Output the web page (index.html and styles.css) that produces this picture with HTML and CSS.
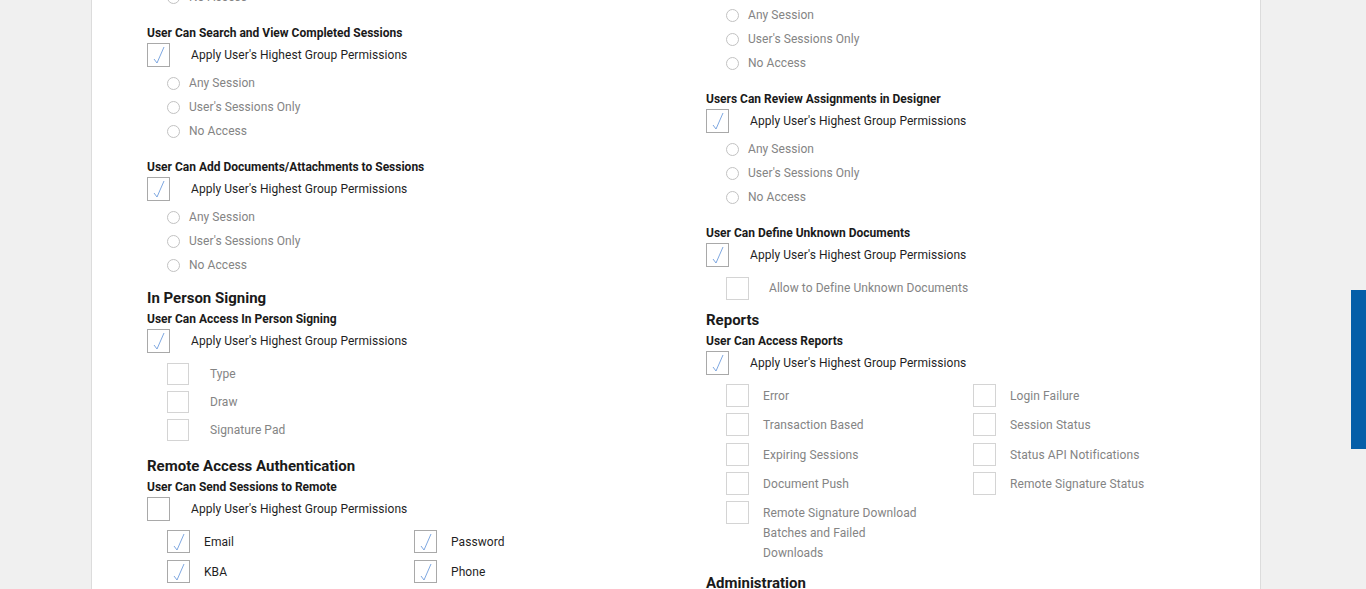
FILE: index.html
```html
<!DOCTYPE html>
<html lang="en">
<head>
<meta charset="utf-8">
<title>Permissions</title>
<link rel="stylesheet" href="styles.css">
</head>
<body>
<div class="panel">
  <div class="cols">
    <div class="col col-left">
      <div class="radio-row"><span class="radio"></span><span class="opt">No Access</span></div>

      <div class="field">
        <div class="field-title">User Can Search and View Completed Sessions</div>
        <div class="apply-row"><span class="cb on"><svg viewBox="0 0 21 22"><polyline points="6,15 9,19 16,3"/></svg></span><span class="apply">Apply User's Highest Group Permissions</span></div>
        <div class="radios">
          <div class="radio-row"><span class="radio"></span><span class="opt">Any Session</span></div>
          <div class="radio-row"><span class="radio"></span><span class="opt">User's Sessions Only</span></div>
          <div class="radio-row"><span class="radio"></span><span class="opt">No Access</span></div>
        </div>
      </div>

      <div class="field">
        <div class="field-title">User Can Add Documents/Attachments to Sessions</div>
        <div class="apply-row"><span class="cb on"><svg viewBox="0 0 21 22"><polyline points="6,15 9,19 16,3"/></svg></span><span class="apply">Apply User's Highest Group Permissions</span></div>
        <div class="radios">
          <div class="radio-row"><span class="radio"></span><span class="opt">Any Session</span></div>
          <div class="radio-row"><span class="radio"></span><span class="opt">User's Sessions Only</span></div>
          <div class="radio-row"><span class="radio"></span><span class="opt">No Access</span></div>
        </div>
      </div>

      <div class="section-title s-after-radios">In Person Signing</div>
      <div class="field-title f-after-section">User Can Access In Person Signing</div>
      <div class="apply-row"><span class="cb on"><svg viewBox="0 0 21 22"><polyline points="6,15 9,19 16,3"/></svg></span><span class="apply">Apply User's Highest Group Permissions</span></div>
      <div class="subs">
        <div class="sub-row"><span class="cb sub"></span><span class="opt">Type</span></div>
        <div class="sub-row"><span class="cb sub"></span><span class="opt">Draw</span></div>
        <div class="sub-row"><span class="cb sub"></span><span class="opt">Signature Pad</span></div>
      </div>

      <div class="section-title s-after-subs">Remote Access Authentication</div>
      <div class="field-title f-after-section">User Can Send Sessions to Remote</div>
      <div class="apply-row"><span class="cb"></span><span class="apply">Apply User's Highest Group Permissions</span></div>
      <div class="opt-grid remote">
        <div class="opt-item"><span class="cb on"><svg viewBox="0 0 21 22"><polyline points="6,15 9,19 16,3"/></svg></span><span class="opt-label dark">Email</span></div>
        <div class="opt-item"><span class="cb on"><svg viewBox="0 0 21 22"><polyline points="6,15 9,19 16,3"/></svg></span><span class="opt-label dark">Password</span></div>
        <div class="opt-item"><span class="cb on"><svg viewBox="0 0 21 22"><polyline points="6,15 9,19 16,3"/></svg></span><span class="opt-label dark">KBA</span></div>
        <div class="opt-item"><span class="cb on"><svg viewBox="0 0 21 22"><polyline points="6,15 9,19 16,3"/></svg></span><span class="opt-label dark">Phone</span></div>
      </div>
    </div>

    <div class="col col-right">
      <div class="radios first">
        <div class="radio-row"><span class="radio"></span><span class="opt">Any Session</span></div>
        <div class="radio-row"><span class="radio"></span><span class="opt">User's Sessions Only</span></div>
        <div class="radio-row"><span class="radio"></span><span class="opt">No Access</span></div>
      </div>

      <div class="field">
        <div class="field-title">Users Can Review Assignments in Designer</div>
        <div class="apply-row"><span class="cb on"><svg viewBox="0 0 21 22"><polyline points="6,15 9,19 16,3"/></svg></span><span class="apply">Apply User's Highest Group Permissions</span></div>
        <div class="radios">
          <div class="radio-row"><span class="radio"></span><span class="opt">Any Session</span></div>
          <div class="radio-row"><span class="radio"></span><span class="opt">User's Sessions Only</span></div>
          <div class="radio-row"><span class="radio"></span><span class="opt">No Access</span></div>
        </div>
      </div>

      <div class="field">
        <div class="field-title">User Can Define Unknown Documents</div>
        <div class="apply-row"><span class="cb on"><svg viewBox="0 0 21 22"><polyline points="6,15 9,19 16,3"/></svg></span><span class="apply">Apply User's Highest Group Permissions</span></div>
        <div class="subs">
          <div class="sub-row allow"><span class="cb sub big"></span><span class="opt">Allow to Define Unknown Documents</span></div>
        </div>
      </div>

      <div class="section-title s-after-allow">Reports</div>
      <div class="field-title f-after-section">User Can Access Reports</div>
      <div class="apply-row"><span class="cb on"><svg viewBox="0 0 21 22"><polyline points="6,15 9,19 16,3"/></svg></span><span class="apply">Apply User's Highest Group Permissions</span></div>
      <div class="opt-grid reports">
        <div class="opt-item"><span class="cb sub big"></span><span class="opt-label">Error</span></div>
        <div class="opt-item"><span class="cb sub big"></span><span class="opt-label">Login Failure</span></div>
        <div class="opt-item"><span class="cb sub big"></span><span class="opt-label">Transaction Based</span></div>
        <div class="opt-item"><span class="cb sub big"></span><span class="opt-label">Session Status</span></div>
        <div class="opt-item"><span class="cb sub big"></span><span class="opt-label">Expiring Sessions</span></div>
        <div class="opt-item"><span class="cb sub big"></span><span class="opt-label">Status API Notifications</span></div>
        <div class="opt-item"><span class="cb sub big"></span><span class="opt-label">Document Push</span></div>
        <div class="opt-item"><span class="cb sub big"></span><span class="opt-label">Remote Signature Status</span></div>
        <div class="opt-item"><span class="cb sub big"></span><span class="opt-label">Remote Signature Download Batches and Failed Downloads</span></div>
      </div>

      <div class="section-title s-after-grid">Administration</div>
    </div>
  </div>
</div>
<div class="side-tab"></div>
</body>
</html>
```

FILE: styles.css
```css
html, body {
  margin: 0;
  padding: 0;
}
body {
  background: #f0f0f0;
  font-family: Roboto, "Liberation Sans", Arial, sans-serif;
  color: #1f1f1f;
  height: 589px;
  overflow: hidden;
}
.panel {
  margin-left: 91px;
  width: 1170px;
  margin-top: -15px;
  background: #ffffff;
  border-left: 1px solid #dcdcdc;
  border-right: 1px solid #dcdcdc;
  padding-left: 55px;
  box-sizing: border-box;
  min-height: 700px;
}
.cols {
  display: grid;
  grid-template-columns: 559px 1fr;
}
.col-right {
  padding-top: 18px;
}

/* titles */
.field-title {
  font-size: 12px;
  font-weight: 700;
  line-height: 16px;
  color: #1a1a1a;
}
.field {
  margin-top: 16px;
}
.section-title {
  font-size: 15px;
  font-weight: 700;
  line-height: 18px;
  color: #1a1a1a;
}
.s-after-radios { margin-top: 12px; }
.s-after-subs { margin-top: 13px; }
.s-after-allow { margin-top: 9px; }
.s-after-grid { margin-top: 11px; }
.f-after-section { margin-top: 4px; }

/* apply checkbox row */
.apply-row {
  margin-top: 2px;
  height: 24px;
  display: flex;
  align-items: center;
  gap: 21px;
}
.apply {
  font-size: 12px;
  color: #1f1f1f;
  line-height: 16px;
  letter-spacing: 0.06px;
}

/* checkboxes */
.cb {
  flex: none;
  width: 23px;
  height: 24px;
  box-sizing: border-box;
  border: 1px solid #a9a9a9;
  background: #fff;
  display: block;
}
.cb svg {
  display: block;
  width: 21px;
  height: 22px;
}
.cb polyline {
  fill: none;
  stroke: #6f9ddd;
  stroke-width: 0.9;
  stroke-linejoin: miter;
}
.cb.sub {
  width: 22px;
  height: 22px;
  border-color: #d4d4d4;
}
.cb.sub.big {
  width: 23px;
  height: 23px;
}

/* radios */
.radios {
  margin-top: 4px;
}
.radios.first {
  margin-top: 0;
}
.radio-row {
  height: 24px;
  display: flex;
  align-items: center;
  padding-left: 20px;
  gap: 9px;
}
.radio {
  flex: none;
  width: 13px;
  height: 13px;
  box-sizing: border-box;
  border: 1px solid #c2c2c2;
  border-radius: 50%;
  background: #fff;
}
.opt {
  font-size: 12px;
  line-height: 16px;
  color: #848484;
  letter-spacing: 0.06px;
}

/* sub checkbox rows */
.subs {
  margin-top: 7px;
}
.sub-row {
  height: 28px;
  display: flex;
  align-items: center;
  padding-left: 20px;
  gap: 21px;
}
.sub-row.allow {
  gap: 20px;
}

/* two-column option grid */
.opt-grid {
  margin-top: 9px;
  padding-left: 20px;
  display: grid;
  grid-template-columns: 247px 247px;
  row-gap: 6px;
}
.opt-grid.remote {
  row-gap: 6.5px;
}
.opt-grid.reports {
  row-gap: 6.3px;
}
.opt-item {
  display: flex;
  align-items: flex-start;
  gap: 14px;
}
.opt-item .cb {
  height: 23px;
}
.opt-label {
  font-size: 12px;
  line-height: 20px;
  padding-top: 2px;
  color: #848484;
  max-width: 160px;
  letter-spacing: 0.08px;
}
.opt-label.dark {
  color: #1f1f1f;
}

.side-tab {
  position: fixed;
  right: 0;
  top: 290px;
  width: 15px;
  height: 159px;
  background: #055ea8;
}
```
